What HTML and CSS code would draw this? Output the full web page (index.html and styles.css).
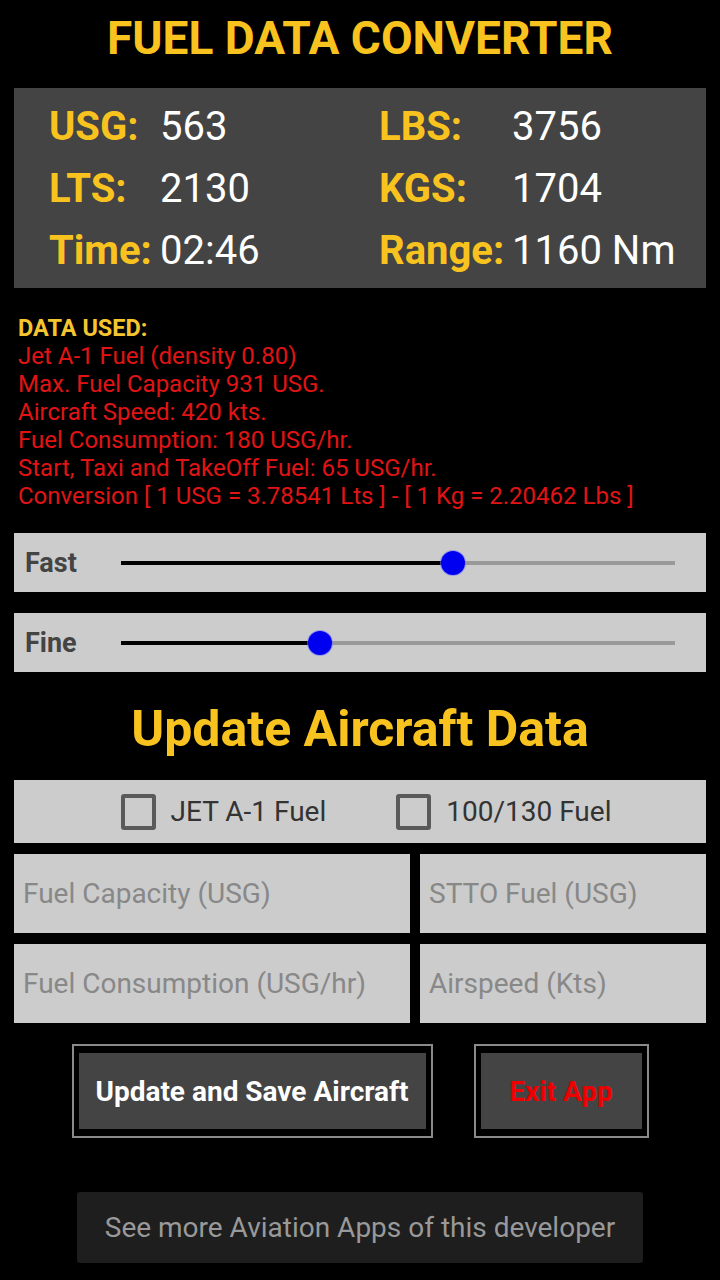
FILE: index.html
```html
<!DOCTYPE html>
<html lang="en">
<head>
  <meta charset="UTF-8" />
  <meta name="viewport" content="width=device-width, initial-scale=1.0"/>
  <title>Fuel Data Converter</title>
  <link rel="stylesheet" href="styles.css">
</head>
<body>

  <div class="app">
    <h1 class="title">FUEL DATA CONVERTER</h1>

    <div class="stats">
      <div class="stat"><span class="label">USG:</span><span class="value">563</span></div>
      <div class="stat"><span class="label">LBS:</span><span class="value">3756</span></div>
      <div class="stat"><span class="label">LTS:</span><span class="value">2130</span></div>
      <div class="stat"><span class="label">KGS:</span><span class="value">1704</span></div>
      <div class="stat"><span class="label">Time:</span><span class="value">02:46</span></div>
      <div class="stat"><span class="label">Range:</span><span class="value">1160 Nm</span></div>
    </div>

    <div class="data-used">
      <div class="data-title">DATA USED:</div>
      <div>Jet A-1 Fuel (density 0.80)</div>
      <div>Max. Fuel Capacity 931 USG.</div>
      <div>Aircraft Speed: 420 kts.</div>
      <div>Fuel Consumption: 180 USG/hr.</div>
      <div>Start, Taxi and TakeOff Fuel: 65 USG/hr.</div>
      <div>Conversion [ 1 USG = 3.78541 Lts ] - [ 1 Kg = 2.20462 Lbs ]</div>
    </div>

    <div class="slider-row">
      <span class="slider-label">Fast</span>
      <div class="track">
        <div class="track-fill" style="width: 60%"></div>
        <div class="thumb" style="left: 60%"></div>
      </div>
    </div>

    <div class="slider-row">
      <span class="slider-label">Fine</span>
      <div class="track">
        <div class="track-fill" style="width: 36%"></div>
        <div class="thumb" style="left: 36%"></div>
      </div>
    </div>

    <h2 class="subtitle">Update Aircraft Data</h2>

    <div class="fuel-types">
      <label class="check"><span class="box"></span>JET A-1 Fuel</label>
      <label class="check"><span class="box"></span>100/130 Fuel</label>
    </div>

    <div class="inputs">
      <input type="text" placeholder="Fuel Capacity (USG)" />
      <input type="text" placeholder="STTO Fuel (USG)" />
      <input type="text" placeholder="Fuel Consumption (USG/hr)" />
      <input type="text" placeholder="Airspeed (Kts)" />
    </div>

    <div class="actions">
      <button class="btn btn-save"><span>Update and Save Aircraft</span></button>
      <button class="btn btn-exit"><span>Exit App</span></button>
    </div>

    <button class="more">See more Aviation Apps of this developer</button>
  </div>

</body>
</html>
```

FILE: styles.css
```css
body {
  margin: 0;
  background: #000;
  font-family: Roboto, "Liberation Sans", sans-serif;
}

.app {
  width: 720px;
  height: 1280px;
  padding: 0 14px;
  box-sizing: border-box;
  display: flex;
  flex-direction: column;
}

.title {
  margin: 13px 0 0;
  color: #f9c31f;
  font-size: 46px;
  font-weight: 700;
  line-height: 50px;
  text-align: center;
}

.stats {
  margin-top: 25px;
  background: #444;
  height: 200px;
  box-sizing: border-box;
  padding: 8px 0 0 35px;
  display: grid;
  grid-template-columns: 330px 1fr;
  grid-auto-rows: 62px;
  align-items: center;
}

.stat {
  font-size: 40px;
  line-height: 48px;
  display: flex;
}

.stat .label {
  color: #f9c31f;
  font-weight: 700;
  width: 111px;
}

.stat:nth-child(even) .label {
  width: 133px;
}

.stat .value {
  color: #fff;
}

.data-used {
  margin: 26px 0 0 4px;
  color: #e01414;
  font-size: 24px;
  line-height: 28px;
}

.data-title {
  color: #f5c530;
  font-weight: 700;
  font-size: 23.5px;
}

.slider-row {
  margin-top: 23px;
  background: #ccc;
  height: 59px;
  display: flex;
  align-items: center;
  padding: 0 31px 0 11px;
}

.slider-row + .slider-row {
  margin-top: 21px;
}

.slider-label {
  color: #444;
  font-size: 27px;
  font-weight: 700;
  width: 96px;
}

.track {
  position: relative;
  flex: 1;
  height: 4px;
  background: #999;
}

.track-fill {
  height: 100%;
  background: #000;
}

.thumb {
  position: absolute;
  top: 50%;
  width: 24px;
  height: 24px;
  margin: -12px 0 0 -12px;
  border-radius: 50%;
  background: #0000f0;
  box-shadow: 0 0 0 1px rgba(120, 120, 255, 0.6);
}

.subtitle {
  margin: 29px 0 0;
  color: #f9c31f;
  font-size: 50px;
  font-weight: 700;
  line-height: 56px;
  text-align: center;
}

.fuel-types {
  margin-top: 23px;
  background: #ccc;
  height: 63px;
  padding-left: 12px;
  display: flex;
  justify-content: center;
  align-items: center;
  gap: 70px;
}

.check {
  display: flex;
  align-items: center;
  gap: 15px;
  color: #333;
  font-size: 28px;
}

.box {
  width: 27px;
  height: 28px;
  border: 4px solid #5a5a5a;
  border-radius: 3px;
}

.inputs {
  margin-top: 11px;
  display: grid;
  grid-template-columns: 396px 1fr;
  grid-auto-rows: 79px;
  gap: 11px 10px;
}

.inputs input {
  border: none;
  background: #ccc;
  padding: 0 9px;
  font-family: Roboto, "Liberation Sans", sans-serif;
  font-size: 28px;
  color: #333;
  outline: none;
  min-width: 0;
}

.inputs input::placeholder {
  color: #888;
}

.actions {
  margin-top: 21px;
  display: flex;
  justify-content: center;
  gap: 41px;
}

.btn {
  height: 94px;
  background: #000;
  border: 2px solid #8a8a8a;
  padding: 7px 5px;
  font-family: Roboto, "Liberation Sans", sans-serif;
  font-size: 28px;
  font-weight: 700;
}

.btn span {
  display: flex;
  height: 100%;
  align-items: center;
  justify-content: center;
  background: #444;
}

.btn-save {
  width: 361px;
  color: #fff;
}

.btn-exit {
  width: 175px;
  color: #e00;
}

.more {
  margin: 54px auto 0;
  width: 566px;
  height: 71px;
  background: #1e1e1e;
  border: none;
  border-radius: 3px;
  color: #999;
  font-family: Roboto, "Liberation Sans", sans-serif;
  font-size: 28px;
}
```
